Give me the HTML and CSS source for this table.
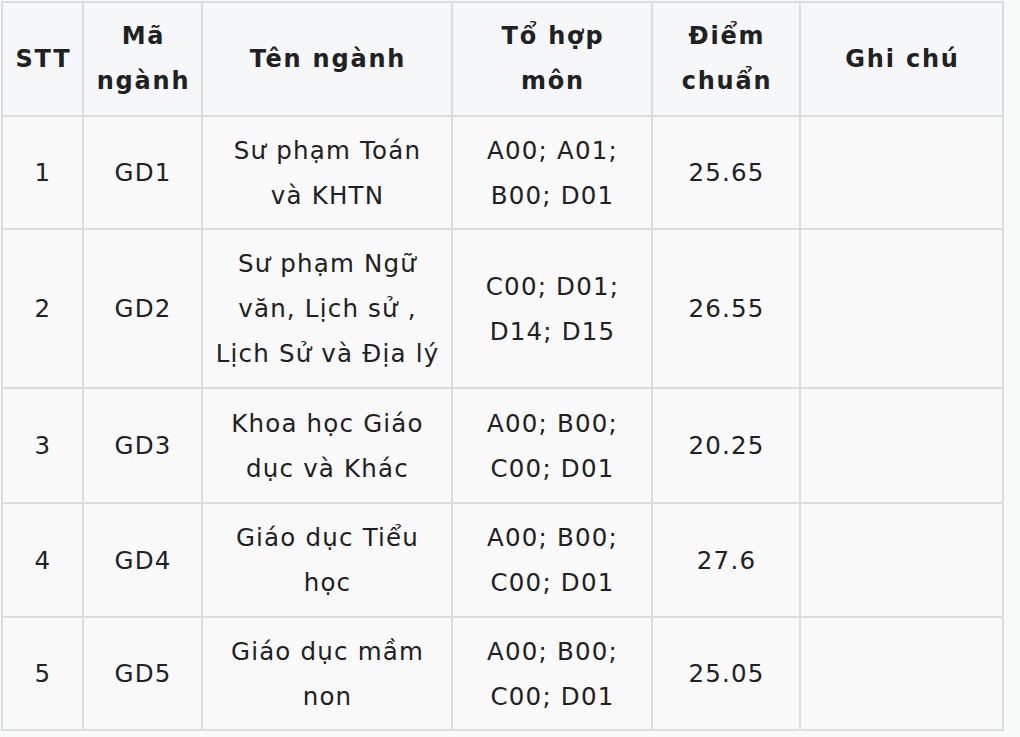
FILE: index.html
```
<!DOCTYPE html>
<html lang="vi">
<head>
<meta charset="utf-8">
<link rel="stylesheet" href="styles.css">
</head>
<body>
<table class="scores">
  <colgroup>
    <col class="c-stt"><col class="c-ma"><col class="c-ten"><col class="c-to"><col class="c-diem"><col class="c-ghi">
  </colgroup>
  <thead>
    <tr class="head-row">
      <th>STT</th>
      <th>Mã<br>ngành</th>
      <th>Tên ngành</th>
      <th>Tổ hợp<br>môn</th>
      <th>Điểm<br>chuẩn</th>
      <th>Ghi chú</th>
    </tr>
  </thead>
  <tbody>
    <tr class="r1">
      <td>1</td><td>GD1</td><td>Sư phạm Toán<br>và KHTN</td><td>A00; A01;<br>B00; D01</td><td>25.65</td><td></td>
    </tr>
    <tr class="r2">
      <td>2</td><td>GD2</td><td>Sư phạm Ngữ<br>văn, Lịch sử ,<br>Lịch Sử và Địa lý</td><td>C00; D01;<br>D14; D15</td><td>26.55</td><td></td>
    </tr>
    <tr class="r3">
      <td>3</td><td>GD3</td><td>Khoa học Giáo<br>dục và Khác</td><td>A00; B00;<br>C00; D01</td><td>20.25</td><td></td>
    </tr>
    <tr class="r4">
      <td>4</td><td>GD4</td><td>Giáo dục Tiểu<br>học</td><td>A00; B00;<br>C00; D01</td><td>27.6</td><td></td>
    </tr>
    <tr class="r5">
      <td>5</td><td>GD5</td><td>Giáo dục mầm<br>non</td><td>A00; B00;<br>C00; D01</td><td>25.05</td><td></td>
    </tr>
  </tbody>
</table>
</body>
</html>
```
FILE: styles.css
```
html, body {
  margin: 0;
  padding: 0;
  background: #f8f9f9;
}
body {
  padding: 1px 0 0 1px;
  font-family: "DejaVu Sans", "Noto Sans", sans-serif;
  color: #202122;
}
.scores {
  border-collapse: collapse;
  table-layout: fixed;
  width: 1001px;
  border: 2px solid #dcdcdc;
  background: #f9f9f9;
}
.c-stt { width: 81px; }
.c-ma { width: 119px; }
.c-ten { width: 250px; }
.c-to { width: 200px; }
.c-diem { width: 148px; }
.c-ghi { width: 203px; }
.scores th,
.scores td {
  border: 2px solid #dcdcdc;
  text-align: center;
  vertical-align: middle;
  font-size: 24.5px;
  line-height: 45px;
  letter-spacing: 1.2px;
  padding: 0 0 0 1px;
}
.scores th {
  background: #f6f7f9;
  font-weight: bold;
  font-size: 24px;
  letter-spacing: 1.8px;
  padding-left: 2px;
}
.head-row { height: 114px; }
.r1 { height: 113px; }
.r2 { height: 159px; }
.r3 { height: 115px; }
.r4 { height: 114px; }
.r5 { height: 113px; }
```
